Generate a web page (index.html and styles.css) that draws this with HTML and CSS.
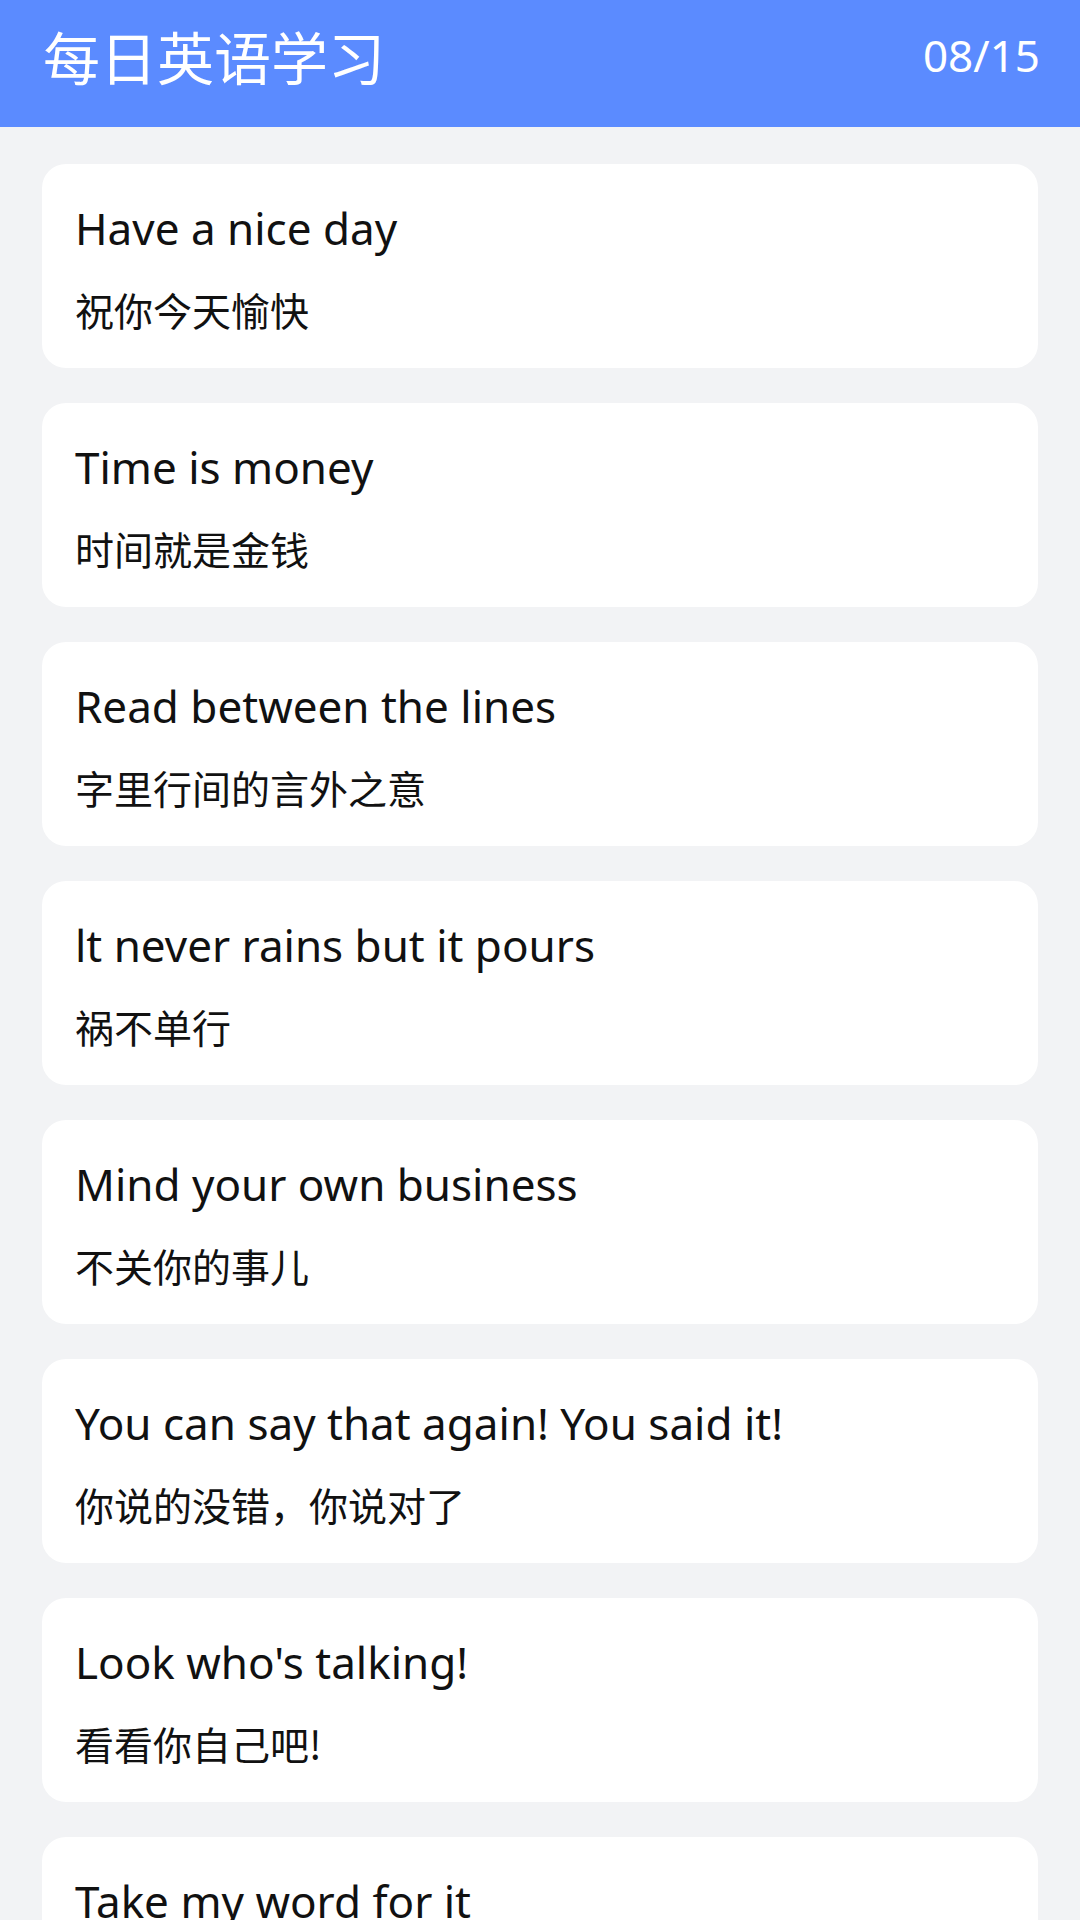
FILE: index.html
```html
<!DOCTYPE html>
<html lang="zh-CN">
<head>
  <meta charset="UTF-8">
  <meta name="viewport" content="width=device-width, initial-scale=1.0">
  <title>每日英语学习</title>
  <link rel="stylesheet" href="styles.css">
</head>
<body>
  <div class="header">
    <div class="title">每日英语学习</div>
    <div class="count">08/15</div>
  </div>

  <div class="list">
    <div class="card">
      <div class="en">Have a nice day</div>
      <div class="cn">祝你今天愉快</div>
    </div>
    <div class="card">
      <div class="en">Time is money</div>
      <div class="cn">时间就是金钱</div>
    </div>
    <div class="card">
      <div class="en">Read between the lines</div>
      <div class="cn">字里行间的言外之意</div>
    </div>
    <div class="card">
      <div class="en">lt never rains but it pours</div>
      <div class="cn">祸不单行</div>
    </div>
    <div class="card">
      <div class="en">Mind your own business</div>
      <div class="cn">不关你的事儿</div>
    </div>
    <div class="card">
      <div class="en">You can say that again! You said it!</div>
      <div class="cn">你说的没错，你说对了</div>
    </div>
    <div class="card">
      <div class="en">Look who's talking!</div>
      <div class="cn">看看你自己吧!</div>
    </div>
    <div class="card">
      <div class="en">Take my word for it</div>
      <div class="cn">相信我，没错的</div>
    </div>
  </div>
</body>
</html>
```

FILE: styles.css
```css
body {
  margin: 0;
  background: #f2f3f5;
  font-family: "Noto Sans", "Noto Sans CJK SC", sans-serif;
  color: #111;
  height: 1920px;
  overflow: hidden;
}

.header {
  display: flex;
  justify-content: space-between;
  align-items: center;
  height: 127px;
  box-sizing: border-box;
  padding: 0 40px 18px 43px;
  background: #5b8bff;
  color: #fff;
}

.title {
  font-family: "Noto Sans CJK SC", sans-serif;
  font-size: 57px;
  line-height: 74px;
}

.count {
  font-size: 44px;
  line-height: 74px;
}

.list {
  display: flex;
  flex-direction: column;
  gap: 35px;
  padding: 37px 42px;
}

.card {
  background: #fff;
  border-radius: 24px;
  height: 204px;
  box-sizing: border-box;
  padding: 32px 33px;
  flex-shrink: 0;
}

.en {
  font-size: 44px;
  line-height: 64px;
}

.cn {
  font-family: "Noto Sans CJK SC", sans-serif;
  font-size: 39px;
  line-height: 56px;
  margin-top: 21px;
}
```
